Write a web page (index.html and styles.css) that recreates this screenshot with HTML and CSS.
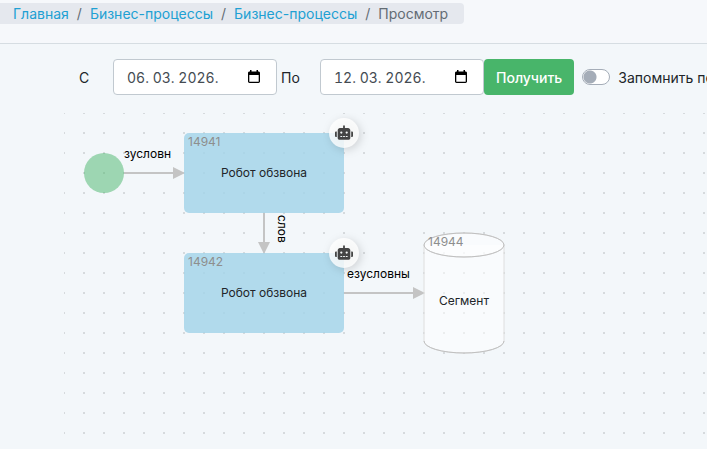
FILE: index.html
```html
<!DOCTYPE html>
<html lang="ru">
<head>
<meta charset="utf-8">
<meta name="viewport" content="width=device-width, initial-scale=1">
<title>Бизнес-процессы</title>
<link rel="stylesheet" href="styles.css">
</head>
<body>
<header class="page-header">
  <nav class="breadcrumb-nav" aria-label="Навигация">
    <ol class="breadcrumb">
      <li><a href="#">Главная</a></li>
      <li><a href="#">Бизнес-процессы</a></li>
      <li><a href="#">Бизнес-процессы</a></li>
      <li>Просмотр</li>
    </ol>
  </nav>
</header>
<main class="content">
  <form class="filter">
    <label class="from-label" for="from">С</label>
    <div class="date-field">
      <input id="from" type="text" value="06. 03. 2026.">
      <svg class="calendar" viewBox="0 0 14 14" aria-hidden="true"><path fill-rule="evenodd" d="M3 0h1.500v1.500h5V0H11v1.500h.5c.8 0 1.500.6 1.500 1.400v8.700c0 .8-.7 1.400-1.500 1.400h-9C1.700 13 1 12.400 1 11.600V2.900c0-.8.7-1.400 1.500-1.400H3zM2.300 5v6.700h9.400V5z"/></svg>
    </div>
    <label class="to-label" for="to">По</label>
    <div class="date-field">
      <input id="to" type="text" value="12. 03. 2026.">
      <svg class="calendar" viewBox="0 0 14 14" aria-hidden="true"><path fill-rule="evenodd" d="M3 0h1.500v1.500h5V0H11v1.500h.5c.8 0 1.500.6 1.500 1.400v8.700c0 .8-.7 1.400-1.500 1.400h-9C1.700 13 1 12.400 1 11.600V2.900c0-.8.7-1.400 1.500-1.400H3zM2.300 5v6.700h9.400V5z"/></svg>
    </div>
    <button class="submit" type="button">Получить</button>
    <input class="switch" id="remember" type="checkbox" role="switch">
    <label class="remember-label" for="remember">Запомнить период</label>
  </form>
  <section class="board">
    <svg class="diagram">
      <defs>
        <pattern id="grid" width="20" height="20" patternUnits="userSpaceOnUse">
          <path class="dot" d="M0 0h1v1H0zM19 0h1v1h-1zM0 19h1v1H0zM19 19h1v1h-1z"/>
        </pattern>
        <symbol id="robot" viewBox="0 0 640 512">
          <path d="M32 224h32v192H32c-18 0-32-14-32-32V256c0-18 14-32 32-32zm512-48v272c0 35-29 64-64 64H160c-35 0-64-29-64-64V176c0-44 36-80 80-80h112V32c0-18 14-32 32-32s32 14 32 32v64h112c44 0 80 36 80 80zM264 256a40 40 0 1 0-80 0 40 40 0 0 0 80 0zm-8 128h-64v32h64zm96 0h-64v32h64zm104-128a40 40 0 1 0-80 0 40 40 0 0 0 80 0zm-8 128h-64v32h64zm192-128v128c0 18-14 32-32 32h-32V224h32c18 0 32 14 32 32z"/>
        </symbol>
      </defs>
      <rect width="100%" height="100%" fill="url(#grid)"/>

      <g class="link">
        <path class="line" d="M60 60h50"/>
        <path class="arrow" d="M109 54l12 6-12 6z"/>
        <text x="60" y="45">зусловн</text>
      </g>
      <g class="link">
        <path class="line" d="M200 100v30"/>
        <path class="arrow" d="M194 129h12l-6 12z"/>
        <text transform="translate(214 102) rotate(90)">слов</text>
      </g>
      <g class="link">
        <path class="line" d="M280 180h70"/>
        <path class="arrow" d="M349 174l12 6-12 6z"/>
        <text x="283" y="165">езусловны</text>
      </g>

      <circle class="start" cx="40" cy="60" r="20"/>

      <g class="node" transform="translate(120 20)">
        <rect class="task" width="160" height="80" rx="5"/>
        <text class="id" x="4" y="13">14941</text>
        <text class="title" x="80" y="44">Робот обзвона</text>
        <circle class="badge" cx="160" cy="0" r="15"/>
        <use class="icon" href="#robot" x="151" y="-8" width="18" height="15"/>
      </g>
      <g class="node" transform="translate(120 140)">
        <rect class="task" width="160" height="80" rx="5"/>
        <text class="id" x="4" y="13">14942</text>
        <text class="title" x="80" y="44">Робот обзвона</text>
        <circle class="badge" cx="160" cy="0" r="15"/>
        <use class="icon" href="#robot" x="151" y="-8" width="18" height="15"/>
      </g>
      <g class="node" transform="translate(360 120)">
        <path class="store" d="M0 12v96a40 12 0 0 0 80 0V12"/>
        <ellipse class="store" cx="40" cy="12" rx="40" ry="12"/>
        <path class="store-edge" d="M0 108a40 12 0 0 0 80 0"/>
        <ellipse class="store-edge" cx="40" cy="12" rx="40" ry="12"/>
        <text class="id" x="4" y="13">14944</text>
        <text class="title" x="40" y="72">Сегмент</text>
      </g>
    </svg>
  </section>
</main>
</body>
</html>
```
FILE: styles.css
```css
* {
  box-sizing: border-box;
}

body {
  display: flex;
  flex-direction: column;
  min-height: 100vh;
  margin: 0;
  overflow: hidden;
  background: #f3f7fa;
  color: #212529;
  font: 14px/21px Inter, "Liberation Sans", sans-serif;
}

.page-header {
  display: flex;
  padding: 3px 0 19px;
  border-bottom: 1px solid #d6dde2;
  background: #f6f8fb;
}

.breadcrumb-nav {
  padding: 0 16px 0 13px;
  border-radius: 0 4px 4px 0;
  background: #e5e8ee;
}

.breadcrumb {
  display: flex;
  margin: 0;
  padding: 0;
  color: #636c74;
  list-style: none;
  white-space: nowrap;
}

.breadcrumb li + li::before {
  content: "/";
  padding: 0 8px;
}

.breadcrumb a {
  color: #20a0d3;
  text-decoration: none;
}

.content {
  display: flex;
  flex: 1;
  flex-direction: column;
  padding: 15px 0 0 64px;
}

.filter {
  display: flex;
  align-items: center;
  padding-left: 15px;
  white-space: nowrap;
}

.from-label {
  flex: 0 0 34px;
}

.to-label {
  flex: 0 0 43px;
  padding-left: 4px;
}

.date-field {
  display: flex;
  flex: 0 0 164px;
  align-items: center;
  min-width: 0;
  height: 36px;
  padding: 0 15px 0 13px;
  border: 1px solid #c1c9d0;
  border-radius: 4px;
  background: #fff;
}

.date-field input {
  flex: 1;
  min-width: 0;
  padding: 0;
  border: 0;
  outline: 0;
  background: none;
  color: #444b52;
  font: inherit;
  font-variant-numeric: tabular-nums;
}

.calendar {
  flex: none;
  width: 14px;
  height: 14px;
}

.submit {
  flex: none;
  height: 36px;
  padding: 0 12px;
  border: 0;
  border-radius: 4px;
  background: #48b56a;
  color: #fff;
  font: inherit;
  font-weight: 500;
}

.switch {
  flex: none;
  width: 28px;
  height: 16px;
  margin: 0 8px;
  border: 1px solid #a5adb8;
  border-radius: 8px;
  appearance: none;
  background: #fff radial-gradient(circle at 7px 7px, #a5adb8 6px, transparent 7px);
}

.board {
  display: flex;
  flex: 1;
  min-height: 336px;
  margin-top: 18px;
}

.diagram {
  flex: 1;
  min-width: 0;
  font-size: 12px;
}

.dot {
  fill: #d6dadd;
}

.line {
  fill: none;
  stroke: #c4c4c4;
  stroke-width: 2;
}

.arrow {
  fill: #c4c4c4;
}

.link text {
  fill: #000;
}

.start {
  fill: #48b56a;
  fill-opacity: 0.5;
}

.task {
  fill: #a4d4e9;
  fill-opacity: 0.83;
}

.id {
  fill: #8e8e8e;
}

.title {
  fill: #212529;
  text-anchor: middle;
}

.badge {
  fill: #fff;
  fill-opacity: 0.8;
  filter: drop-shadow(2px 2px 4px rgb(0 0 0 / 18%));
}

.icon {
  fill: #444;
}

.store {
  fill: #fff;
  fill-opacity: 0.5;
  stroke: #dedede;
}

.store-edge {
  fill: none;
  stroke: #c0c0c0;
}
```
